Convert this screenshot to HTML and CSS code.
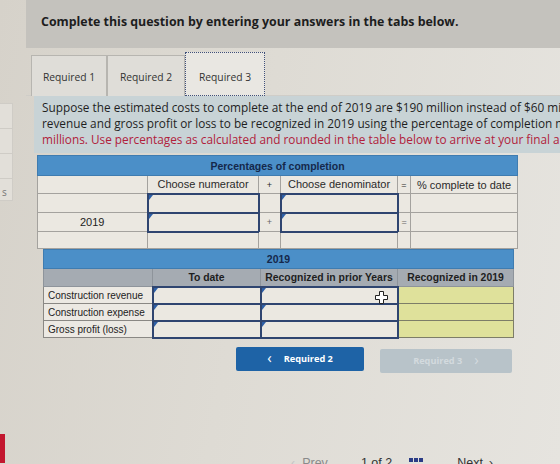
FILE: index.html
```html
<!DOCTYPE html>
<html>
<head>
    <meta charset="utf-8" />
    <title>Required 3</title>
    <link rel="stylesheet" href="styles.css">
</head>
<body>
    <div class="side">
        <div class="side-box"></div>
        <div class="side-box"></div>
        <div class="side-box"></div>
        <div class="side-box side-last">s</div>
        <div class="side-red"></div>
    </div>
    <div class="main">
        <div class="top">Complete this question by entering your answers in the tabs below.</div>

        <div class="tabs">
            <div class="tab tab-1">Required 1</div>
            <div class="tab tab-2">Required 2</div>
            <div class="tab tab-on">Required 3</div>
        </div>

        <div class="panel">
            <div class="line">Suppose the estimated costs to complete at the end of 2019 are $190 million instead of $60 million. Determine the amount of</div>
            <div class="line">revenue and gross profit or loss to be recognized in 2019 using the percentage of completion method. (Do not round</div>
            <div class="line red">millions. Use percentages as calculated and rounded in the table below to arrive at your final answers.)</div>
        </div>

        <!-- percentages of completion -->
        <table class="t1">
            <colgroup>
                <col style="width:110px"><col style="width:111px"><col style="width:22px">
                <col style="width:117px"><col style="width:13px"><col style="width:107px">
            </colgroup>
            <tr class="hd"><td colspan="6">Percentages of completion</td></tr>
            <tr class="r1">
                <td></td>
                <td>Choose numerator</td>
                <td class="op">+</td>
                <td>Choose denominator</td>
                <td class="op">=</td>
                <td>% complete to date</td>
            </tr>
            <tr class="r2">
                <td></td>
                <td class="inp"><span class="mark"></span></td>
                <td></td>
                <td class="inp"><span class="mark"></span></td>
                <td></td>
                <td></td>
            </tr>
            <tr class="r2">
                <td>2019</td>
                <td class="inp"><span class="mark"></span></td>
                <td class="op">+</td>
                <td class="inp"><span class="mark"></span></td>
                <td class="op">=</td>
                <td></td>
            </tr>
            <tr class="r3">
                <td></td><td></td><td></td><td></td><td></td><td></td>
            </tr>
        </table>

        <!-- revenue and gross profit -->
        <table class="t2">
            <colgroup>
                <col style="width:109px"><col style="width:108px"><col style="width:137px"><col style="width:116px">
            </colgroup>
            <tr class="hd"><td colspan="4">2019</td></tr>
            <tr class="sub">
                <td></td>
                <td>To date</td>
                <td>Recognized in prior Years</td>
                <td>Recognized in 2019</td>
            </tr>
            <tr>
                <td class="lbl">Construction revenue</td>
                <td class="inp"><span class="mark"></span></td>
                <td class="inp"><span class="mark"></span>
                    <svg class="cursor" width="13" height="13" viewBox="0 0 13 13">
                        <path d="M4.5 0.5h4v4h4v4h-4v4h-4v-4h-4v-4h4z" fill="#fff" stroke="#222" stroke-width="1"/>
                    </svg>
                </td>
                <td class="yel"></td>
            </tr>
            <tr>
                <td class="lbl">Construction expense</td>
                <td class="inp"><span class="mark"></span></td>
                <td class="inp"><span class="mark"></span></td>
                <td class="yel"></td>
            </tr>
            <tr>
                <td class="lbl">Gross profit (loss)</td>
                <td class="inp"><span class="mark"></span></td>
                <td class="inp"><span class="mark"></span></td>
                <td class="yel"></td>
            </tr>
        </table>

        <div class="nav">
            <div class="btn"><span class="chev">&lsaquo;</span>Required 2</div>
            <div class="btn btn-off">Required 3<span class="chev">&rsaquo;</span></div>
        </div>

        <div class="pager">
            <span class="prev"><span class="pchev">&lsaquo;</span>Prev</span>
            <span class="count">1 of 2</span>
            <span class="grid"><i></i><i></i><i></i></span>
            <span class="next">Next<span class="nchev">&rsaquo;</span></span>
        </div>
    </div>
</body>
</html>
```

FILE: styles.css
```css
* {
    box-sizing: border-box;
}

body {
    margin: 0;
    width: 560px;
    height: 464px;
    overflow: hidden;
    display: flex;
    background: linear-gradient(100deg, #d6d2ca 0%, #dedbd4 45%, #e6e4df 100%);
    font-family: "Open Sans", "DejaVu Sans", sans-serif;
    color: #222;
}

/* left stub of the side menu */
.side {
    width: 13px;
    flex: none;
    padding-top: 103px;
    display: flex;
    flex-direction: column;
}

.side-box {
    height: 25px;
    border: 1px solid #cfccc6;
    border-left: none;
    border-bottom: none;
    background: #e2dfd9;
}

.side-last {
    height: 23px;
    border-bottom: 1px solid #cfccc6;
    font-size: 10px;
    color: #777;
    padding: 6px 0 0 2px;
}

.side-red {
    margin-top: 233px;
    width: 5px;
    height: 29px;
    background: #c3172f;
}

.main {
    flex: 1;
    margin-left: 13px;
    min-width: 0;
}

.top {
    height: 48px;
    background: #c4c2bd;
    padding: 13px 0 0 15px;
    font-size: 12.4px;
    font-weight: bold;
    color: #1d1d1d;
    white-space: nowrap;
}

.tabs {
    display: flex;
    padding: 4px 0 0 5px;
    height: 48px;
    border-bottom: 1px solid #cfcdc8;
}

.tab {
    height: 41px;
    margin-top: 3px;
    border: 1px solid #b7b5b0;
    border-bottom: none;
    background: #dfddd8;
    font-size: 10.3px;
    padding-top: 14px;
    text-align: center;
    color: #333;
}

.tab-1 {
    width: 76px;
}

.tab-2 {
    width: 78px;
}

.tab-on {
    width: 80px;
    height: 44px;
    margin-top: 0;
    background: #e9e7e2;
    border: 1px dotted #40507a;
    padding-top: 17px;
}

.panel {
    margin-left: 8px;
    height: 57px;
    background: #c8d3d6;
    padding: 3px 0 0 8px;
    overflow: hidden;
}

.line {
    white-space: nowrap;
    font-size: 11.8px;
    line-height: 16px;
    color: #1f1f1f;
}

.red {
    color: #b1213b;
}

table {
    border-collapse: collapse;
    table-layout: fixed;
    font-family: "Liberation Sans", Arial, sans-serif;
    font-size: 11px;
}

td {
    padding: 0;
    text-align: center;
    border: 1px solid #a4a29e;
    background: #ebe8e1;
    position: relative;
}

.t1 {
    margin: 2px 0 0 11px;
    width: 480px;
}

.t1 .hd td, .t2 .hd td {
    height: 20px;
    background: #4b8fc8;
    border-color: #3f7cb0;
    color: #15284b;
    font-size: 10.5px;
    font-weight: bold;
}

.t1 .r1 td {
    height: 18px;
    color: #2a2a2a;
}

.t1 .r2 td {
    height: 19px;
}

.t1 .r3 td {
    height: 17px;
}

.op {
    font-size: 9px;
    color: #666;
}

.inp {
    border: 2px solid #2f4570;
}

/* small blue corner on editable cells */
.mark {
    position: absolute;
    left: 0;
    top: 0;
    width: 0;
    height: 0;
    border-top: 5px solid #2d5fa6;
    border-right: 4px solid transparent;
}

.t2 {
    margin: 0 0 0 17px;
    width: 470px;
}

.t2 .hd td {
    height: 19px;
}

.t2 .sub td {
    height: 18px;
    background: #a5abb2;
    border-color: #8e949b;
    font-size: 10.4px;
    font-weight: bold;
    color: #1e1e1e;
}

.t2 td {
    height: 17px;
}

.t2 .lbl {
    text-align: left;
    padding-left: 4px;
    background: #ece9e3;
    border-color: #8a8884;
    font-size: 10px;
    white-space: nowrap;
    color: #222;
}

.yel {
    background: #dfe19b;
    border-color: #7d7d68;
}

.cursor {
    position: absolute;
    right: 9px;
    top: 3px;
}

.nav {
    display: flex;
    margin: 8px 0 0 210px;
    gap: 16px;
}

.btn {
    width: 128px;
    height: 24px;
    background: #1e63a6;
    border-radius: 2px;
    color: #fff;
    font-size: 9.2px;
    font-weight: bold;
    display: flex;
    align-items: center;
    justify-content: center;
    gap: 12px;
}

.btn-off {
    width: 132px;
    margin-top: 2px;
    background: #b8c3c9;
    color: #d3dade;
}

.chev {
    font-size: 15px;
    font-weight: normal;
    margin-top: -3px;
}

.pager {
    margin: 83px 0 0 265px;
    display: flex;
    align-items: flex-start;
    font-family: "Liberation Sans", Arial, sans-serif;
    font-size: 12.5px;
    height: 20px;
}

.prev {
    color: #8a8a8a;
}

.pchev {
    color: #c4c4c4;
    margin-right: 7px;
}

.count {
    margin-left: 33px;
    color: #333;
}

.grid {
    margin: 2px 0 0 17px;
    display: flex;
    gap: 1px;
}

.grid i {
    width: 4px;
    height: 4px;
    background: #2b3c86;
}

.next {
    margin-left: 34px;
    color: #333;
}

.nchev {
    margin-left: 6px;
}
```
